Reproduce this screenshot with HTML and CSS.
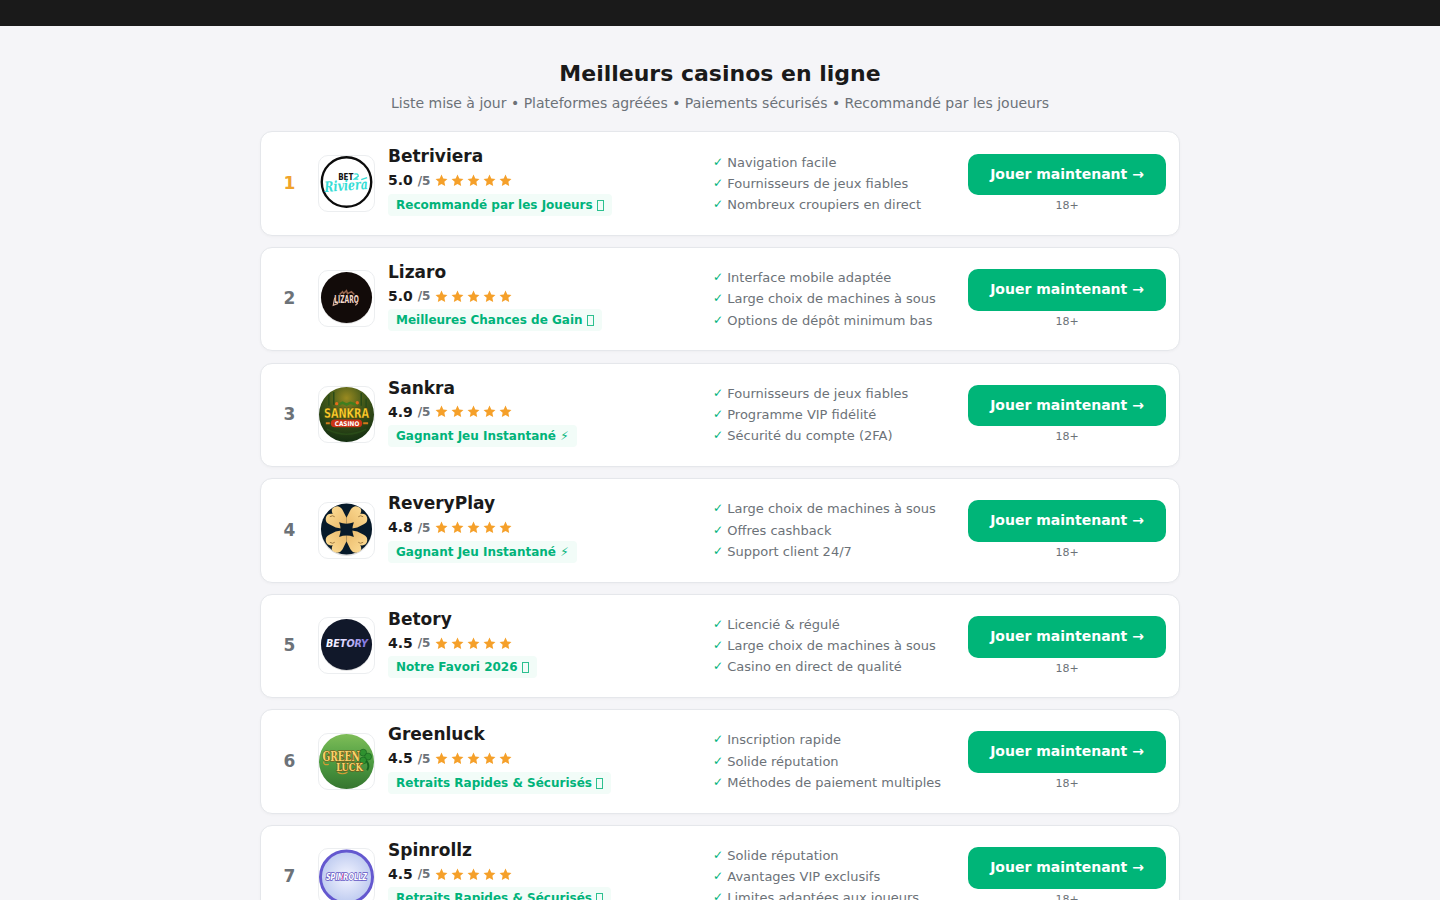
FILE: index.html
```
<!DOCTYPE html>
<html lang="fr">
<head>
<meta charset="utf-8">
<title>Meilleurs casinos en ligne</title>
<link rel="stylesheet" href="styles.css">
</head>
<body>
<div class="topbar"></div>
<main class="wrap">
  <h1 class="title">Meilleurs casinos en ligne</h1>
  <p class="subtitle">Liste mise à jour • Plateformes agréées • Paiements sécurisés • Recommandé par les joueurs</p>
  <div class="list" id="list"></div>
</main>

<template id="logo-0"><svg viewBox="0 0 56 56">
  <circle cx="28" cy="26.500" r="25.200" fill="#fff" stroke="#0b0b0b" stroke-width="2.400"/>
  <text x="19.500" y="24.500" class="sans" font-size="9" textLength="15.500" lengthAdjust="spacingAndGlyphs" fill="#111">BET</text>
  <path d="M36 18.500q4-1 4 2l-4 3h4M43 24l6-2" fill="none" stroke="#35ddd5" stroke-width="1.400"/>
  <text x="5.500" y="35" class="script" font-size="14.500" textLength="44" lengthAdjust="spacingAndGlyphs" transform="rotate(-4 28 30)">Riviera</text>
</svg></template>
<template id="logo-1"><svg viewBox="0 0 56 56">
  <circle cx="28" cy="28" r="26" fill="#e3e3e3"/><circle cx="28" cy="27" r="26" fill="#120b09"/>
  <path d="M21 24l3-3 1 2 3-3 1 3 4-2 3 3" fill="none" stroke="#98654d" stroke-width="1.500"/>
  <text x="15.500" y="32.500" class="sans" font-size="10" textLength="25" lengthAdjust="spacingAndGlyphs" fill="#f2d9ca">LIZARO</text>
  <path d="M16 27l-1.500 8 5-2M37 31l2 2-2 2" fill="none" stroke="#d9b19b" stroke-width="1.200"/>
</svg></template>
<template id="logo-2"><svg viewBox="0 0 56 56">
  <defs><radialGradient id="g2" cx=".5" cy=".2" r=".8"><stop offset="0" stop-color="#9a8a20"/><stop offset=".4" stop-color="#43591a"/><stop offset="1" stop-color="#142f11"/></radialGradient></defs>
  <circle cx="28" cy="28" r="28" fill="url(#g2)"/>
  <path d="M10 8v11M15 5v13M43 6v13M48 12v10M8 43q20 10 40 0" stroke="#294b18" stroke-width="1.500" fill="none"/>
  <path d="M20 18l4-2 4 2 4-2 6 2" stroke="#3f7e20" stroke-width="2.500" fill="none"/>
  <circle cx="18" cy="17" r="1.700" fill="#e66b1c"/><circle cx="39" cy="16" r="1.700" fill="#e66b1c"/>
  <text x="5" y="32" class="sans" font-size="15" textLength="46" lengthAdjust="spacingAndGlyphs" fill="#ffd12c" stroke="#5b3505" stroke-width=".3">SANKRA</text>
  <rect x="12" y="33" width="32" height="8" rx="4" fill="#cb3416"/><path d="M7 37h4M45 37h5" stroke="#d27b1b" stroke-width="2"/>
  <text x="16" y="39.500" class="sans" font-size="6.500" textLength="25" lengthAdjust="spacingAndGlyphs" fill="#fff">CASINO</text>
</svg></template>
<template id="logo-3"><svg viewBox="0 0 56 56">
  <defs>
    <linearGradient id="g3" x2="1" y2="1"><stop stop-color="#ffe09a"/><stop offset="1" stop-color="#e9b868"/></linearGradient>
    <g id="lobe"><path d="M28 15L24 7Q20 1 14 5Q12 8 14 11Q8 10 7 15Q6 20 11 22L17 25L28 27Z" fill="url(#g3)"/><path d="M11 14q3-2 5 0" stroke="#8a6530" stroke-width=".8" fill="none"/></g>
  </defs>
  <circle cx="28" cy="28" r="26" fill="#ddd"/><circle cx="28" cy="26.500" r="26" fill="#071a2a"/>
  <use href="#lobe"/><use href="#lobe" transform="matrix(-1 0 0 1 56 0)"/>
  <use href="#lobe" transform="matrix(1 0 0 -1 0 54)"/><use href="#lobe" transform="matrix(-1 0 0 -1 56 54)"/>
  <path d="M20.500 19.500q7.500 3 15 0q-3 7.500 0 15q-7.500-3-15 0q3-7.500 0-15z" fill="#071a2a"/>
</svg></template>
<template id="logo-4"><svg viewBox="0 0 56 56">
  <defs><linearGradient id="g4"><stop stop-color="#fff"/><stop offset=".45" stop-color="#ddd6ff"/><stop offset="1" stop-color="#7164dc"/></linearGradient></defs>
  <circle cx="28" cy="28" r="26" fill="#ddd"/><circle cx="28" cy="27" r="26" fill="#11182a"/>
  <text x="7" y="29.500" class="sans slant" font-size="11.500" textLength="43" lengthAdjust="spacingAndGlyphs" fill="url(#g4)">BETORY</text>
</svg></template>
<template id="logo-5"><svg viewBox="0 0 56 56">
  <defs><linearGradient id="g5" x2="0" y2="1"><stop stop-color="#7fbd58"/><stop offset=".5" stop-color="#4e9d42"/><stop offset="1" stop-color="#35752f"/></linearGradient></defs>
  <circle cx="28" cy="28" r="28" fill="url(#g5)"/>
  <g fill="#2f912f" stroke="#17651f" stroke-width=".7"><circle cx="45" cy="19" r="3.500"/><circle cx="50" cy="23" r="3.500"/><circle cx="45" cy="27" r="3.500"/><path d="M48 27q4 5 1 10" fill="none" stroke-width="2"/></g>
  <text x="3.500" y="27.500" class="lg gold" font-size="12.500" textLength="38" lengthAdjust="spacingAndGlyphs">GREEN</text>
  <text x="17.500" y="37.500" class="lg gold" font-size="12" textLength="27" lengthAdjust="spacingAndGlyphs">LUCK</text>
  <path d="M5 28q-1 4 5 3M19 39q5 3 10 0" fill="none" stroke="#d79b35" stroke-width="1.200"/>
</svg></template>
<template id="logo-6"><svg viewBox="0 0 56 56">
  <defs><radialGradient id="g6"><stop stop-color="#f3f4ff"/><stop offset="1" stop-color="#becbf0"/></radialGradient></defs>
  <circle cx="28" cy="28.500" r="26.500" fill="url(#g6)" stroke="#6458cf" stroke-width="3"/>
  <text x="7" y="31.500" class="sans slant outline" font-size="8.500" textLength="42" lengthAdjust="spacingAndGlyphs" fill="#fff">SPINROLLZ</text>
  <path d="M25 25l-2 6" stroke="#e64898" stroke-width="1"/>
</svg></template>
<script src="app.js"></script>
</body>
</html>
```
FILE: styles.css
```
* { box-sizing: border-box; }
body { margin: 0; height: 900px; overflow: hidden; background: #f5f5f8; color: #1a1a1a; font-family: "DejaVu Sans", sans-serif; }
.topbar { height: 26px; background: #1a1a1a; }
.wrap { width: 920px; margin: 0 auto; padding-top: 34px; }
.title { margin: 0; font-size: 22px; line-height: 28px; text-align: center; }
.subtitle { margin: 4px 0 17.400px; font-size: 14px; line-height: 22px; text-align: center; color: #6c7278; }
.list { display: flex; flex-direction: column; gap: 11.200px; }
.card { display: grid; grid-template-columns: 30px 57px 311px 240px 198px; column-gap: 14px; align-items: center; height: 104.400px; flex: none; padding: 13px 13px 13.600px 13px; background: #fff; border: 1px solid #e5e7eb; border-radius: 12px; box-shadow: 0 1px 3px rgba(0,0,0,.03); }
.rank { font-size: 17px; font-weight: 700; line-height: 20px; color: #6c7278; text-align: center; padding-left: 1px; margin-top: -1px; }
.rank.first { color: #f0a32b; }
.logo { width: 57px; height: 57px; border: 1px solid #eceef0; border-radius: 10px; }
.logo svg { display: block; width: 55px; height: 55px; overflow: visible; }
.info { height: 76px; margin-left: -1px; }
.name { font-size: 17px; font-weight: 700; line-height: 22px; }
.rating { display: flex; align-items: center; height: 18px; margin-top: 4px; font-size: 14px; font-weight: 700; }
.rating small { font-size: 12px; font-weight: 700; color: #6c7278; margin: 1px 4px 0 5px; letter-spacing: -.2px; }
.stars { display: flex; gap: 3px; margin: .6px 0 0 1.200px; }
.stars svg { width: 13px; height: 13px; fill: #f5a02a; }
.badge { display: inline-block; height: 22px; margin-top: 4.500px; padding: 0 8px; border-radius: 4px; background: #f2fcf8; color: #00b37a; font-size: 12px; font-weight: 700; line-height: 22px; white-space: nowrap; }
.box { display: inline-block; width: 7px; height: 11px; margin: 0; border: 1px solid #2cc08f; vertical-align: -2px; }
.features { list-style: none; margin: 0 0 0 -1px; padding: 0; font-size: 13px; line-height: 21.200px; color: #6c7278; white-space: nowrap; }
.features li { display: flex; gap: 4.200px; }
.features li::before { content: "✓"; font-size: 12px; color: #00b37a; }
.cta { text-align: center; }
.button { display: block; height: 41.600px; border-radius: 10px; background: #00b578; color: #fff; font-size: 14px; font-weight: 700; line-height: 41px; text-decoration: none; }
.age { margin-top: 4px; font-size: 11px; line-height: 14px; color: #6c7278; }
.lg { font-family: "DejaVu Serif", serif; font-weight: 700; }
.gold { fill: #f9d36a; stroke: #7a4c12; stroke-width: 1.200px; paint-order: stroke; }
.sans { font-family: "DejaVu Sans", sans-serif; font-weight: 700; }
.slant { font-style: italic; }
.script { font-family: "DejaVu Serif", serif; font-style: italic; font-weight: 700; fill: #35ddd5; }
.outline { stroke: #6254c4; stroke-width: 1.600px; paint-order: stroke; }
```
FILE: app.js
```
const box = '<i class="box"></i>';
const casinos = [
  ["Betriviera", "5.0", "Recommandé par les Joueurs " + box, ["Navigation facile", "Fournisseurs de jeux fiables", "Nombreux croupiers en direct"]],
  ["Lizaro", "5.0", "Meilleures Chances de Gain " + box, ["Interface mobile adaptée", "Large choix de machines à sous", "Options de dépôt minimum bas"]],
  ["Sankra", "4.9", "Gagnant Jeu Instantané ⚡", ["Fournisseurs de jeux fiables", "Programme VIP fidélité", "Sécurité du compte (2FA)"]],
  ["ReveryPlay", "4.8", "Gagnant Jeu Instantané ⚡", ["Large choix de machines à sous", "Offres cashback", "Support client 24/7"]],
  ["Betory", "4.5", "Notre Favori 2026 " + box, ["Licencié & régulé", "Large choix de machines à sous", "Casino en direct de qualité"]],
  ["Greenluck", "4.5", "Retraits Rapides & Sécurisés " + box, ["Inscription rapide", "Solide réputation", "Méthodes de paiement multiples"]],
  ["Spinrollz", "4.5", "Retraits Rapides & Sécurisés " + box, ["Solide réputation", "Avantages VIP exclusifs", "Limites adaptées aux joueurs"]]
];
const star = '<svg viewBox="0 0 24 24"><path d="M12 1l3.300 7.200 7.700.9-5.700 5.300 1.500 7.900-6.800-3.900-6.800 3.900 1.500-7.900L1 9.100l7.700-.9z"/></svg>';
const esc = s => s.replace(/&/g, "&amp;");
document.getElementById("list").innerHTML = casinos.map(([name, score, badge, features], i) => `
  <article class="card">
    <div class="rank${i ? "" : " first"}">${i + 1}</div>
    <div class="logo">${document.getElementById("logo-" + i).innerHTML}</div>
    <div class="info">
      <div class="name">${name}</div>
      <div class="rating">${score}<small>/5</small><span class="stars">${star.repeat(5)}</span></div>
      <div class="badge">${esc(badge)}</div>
    </div>
    <ul class="features">${features.map(f => `<li>${esc(f)}</li>`).join("")}</ul>
    <div class="cta"><a class="button" href="#">Jouer maintenant →</a><div class="age">18+</div></div>
  </article>`).join("");
```
